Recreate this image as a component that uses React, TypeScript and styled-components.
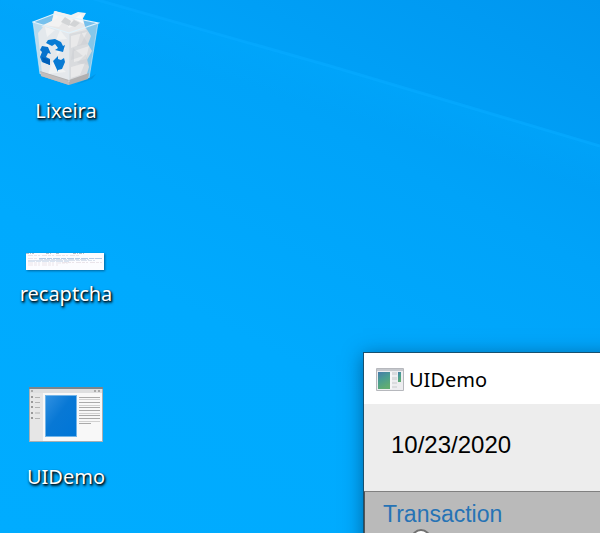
import React from "react";
import styled, { createGlobalStyle } from "styled-components";

const GlobalStyle = createGlobalStyle`
  * { box-sizing: border-box; }
  body { margin: 0; font-family: "Noto Sans", sans-serif; }
`;

const Desktop = styled.main`
  position: relative;
  height: 100vh;
  overflow: hidden;
  background: linear-gradient(28deg, #00acff 0%, #00aafe 38%, #00a3f9 68%, #0096ef 100%);
`;

const LightBeam = styled.svg`
  position: absolute;
  inset: 0;
  width: 100%;
  height: 100%;
`;

const Shortcuts = styled.nav`
  position: relative;
  display: grid;
  grid-template-columns: 132px;
  grid-auto-rows: 183px;
`;

const Shortcut = styled.button`
  display: flex;
  flex-direction: column;
  align-items: center;
  padding: 8px 0 0;
  border: 0;
  background: none;
  color: #fff;
  font: 20px/28px "Noto Sans", sans-serif;
  text-shadow: 1px 1px 2px #000, 1px 2px 3px rgba(0, 0, 0, 0.8);
`;

const IconSlot = styled.span`
  display: flex;
  align-items: center;
  justify-content: center;
  height: 80px;
  margin-bottom: 9px;
`;

const ThumbnailSlot = styled(IconSlot)`
  align-items: flex-end;
  padding: 0 2px 1px 0;
  filter: drop-shadow(1px 1px 1px rgba(0, 30, 60, 0.5));
`;

const AppWindow = styled.section`
  position: absolute;
  top: 352px;
  left: 363px;
  right: -200px;
  border: 1px solid #17506f;
  background: #ededed;
  box-shadow: 0 3px 18px rgba(0, 35, 70, 0.5);
`;

const TitleBar = styled.header`
  display: flex;
  align-items: center;
  gap: 5px;
  height: 51px;
  padding: 2px 12px 0;
  background: #fff;
`;

const Title = styled.h1`
  margin: 0;
  font: 20px/28px "Noto Sans", sans-serif;
  color: #000;
`;

const DateRow = styled.time`
  display: flex;
  align-items: center;
  height: 87px;
  padding: 0 27px 6px;
  font: 24px/32px "Liberation Sans", sans-serif;
  color: #000;
`;

const TransactionGroup = styled.fieldset`
  display: flex;
  flex-direction: column;
  margin: 0;
  padding: 8px 18px 24px;
  border: 0;
  border-top: 1px solid #808080;
  border-left: 1px solid #555;
  background: #bababa;
`;

const GroupTitle = styled.legend`
  float: left;
  padding: 0;
  font: 23px/28px "Liberation Sans", sans-serif;
  color: #2673b5;
`;

const Option = styled.label`
  display: flex;
  align-items: flex-start;
  gap: 6px;
  padding-left: 28px;
  font: 21px/26px "Noto Sans", sans-serif;
  color: #000;
`;

const Radio = styled.input`
  appearance: none;
  width: 20px;
  height: 20px;
  margin: 1px 0 0;
  border: 2px solid #707070;
  border-radius: 50%;
  background: #fff;
`;

const RecycleBin = () => (
  <svg width="68" height="80" viewBox="0 0 68 80" aria-hidden="true">
    <defs>
      <linearGradient id="binLeft" x1="0" y1="0" x2="1" y2="1">
        <stop offset="0" stopColor="#c8dfed" />
        <stop offset="1" stopColor="#e6e8eb" />
      </linearGradient>
    </defs>
    <path d="M57 70 64 66 60 71 43 77Z" fill="#0879bd" opacity=".35" />
    <path d="m1 14 21-8 44 9-29 10Z" fill="#9dcae7" opacity=".75" />
    <path d="m1 14 36 11v51L8 66Z" fill="url(#binLeft)" opacity=".88" />
    <path d="m66 15-9 55-20 6V25Z" fill="#a7cfe5" opacity=".8" />
    <path d="m6 25 6-7 25 7v49L10 66Z" fill="#e8e9eb" opacity=".9" />
    <path d="m37 25 17-5 5 8-3 8 4 7-5 9 2 7-3 10-17 5Z" fill="#d9dbde" />
    <path d="m9 19 11-6 2-10 12 3 6 2 9-3 2 6 3 11-17 4-15-5Z" fill="#e8e8e9" />
    <path d="m20 13 3-10 10 4-6 6Z" fill="#f5f5f5" />
    <path d="m23 3 3 7-6 3-9 4 16 2 5-6 5 7 8-4-5-5 10 1 4-7-8-1-7 3Z" fill="#f2f2f2" />
    <path d="m33 9 6 4-2 5-8-4Zm9 3 6 3-5 4-6-2Z" fill="#d2d4d6" />
    <path d="m49 6 3 10-10-5Z" fill="#fafafa" />
    <path d="m13 19 10 3-8 7Zm15 3 7 9-11 1Zm-5 12 11 6-9 7Zm-14 7 7-7 3 12Zm12 11 13 12-18 2Z" fill="#f8f8f8" opacity=".6" />
    <path d="m39 28 16-4-6 12-10 4Zm3 15 15-5-3 13-12 3Zm-3 16 14-4-5 12-9 3Z" fill="#ededee" opacity=".75" />
    <path d="m49 24 7 12-11 2Zm-8 16 10 8-12 4Zm13 6 3 11-12-2Z" fill="#c9cdd1" opacity=".45" />
    <path d="m8 63 29 9 20-7-1 6-19 6-28-9Z" fill="#b1b0b1" />
    <path d="m9 64 28 9v4L9 68Z" fill="#c2bdbd" />
    <path d="m1 14 21-8 44 9-29 10Z" fill="none" stroke="#e1f3fc" strokeWidth="1.1" />
    <path d="m1 14 7 52m58-51-9 55M37 25v49" stroke="#ddebf4" strokeWidth=".8" opacity=".75" />
    <path d="m16 32 7-1 6 3 2 4 2-1-2 7-8-2 3-2-3-4-3 2-6-3Z" fill="#087bd4" />
    <path d="m10 38 6 1 3 7-3-1-2 4 4 2v6l-8-3-2-5 2-5-2-2Z" fill="#0873cd" />
    <path d="m21 53 5-5v3l3 1 3-2 1 4-3 7-4 1v2Z" fill="#087bd4" />
    <path d="m10 49 8 3v5l-7-3Z" fill="#005fb8" />
  </svg>
);

const DocumentThumbnail = () => (
  <svg width="78" height="17" viewBox="0 0 78 17" aria-hidden="true">
    <path d="M0 0h78v17H0Z" fill="#fcfcff" />
    <path d="M0 .5h8m12 0h5m5 0h4m13 0h12" stroke="#b7bfc7" strokeDasharray="3 1 1 1" />
    <path d="M2 2.5h52M2 5.5h10m53 0h11M36 9.5h40M2 10h40M2 12h30" stroke="#ebe4ea" strokeDasharray="5 1 3 1 2 2" />
    <path d="M13 5.5h63M2 8h42" stroke="#b7cbe4" strokeDasharray="7 1 5 1" />
    <path d="M13 6.5h50M2 7.5h67" stroke="#dae1ed" strokeDasharray="4 1 6 1" />
  </svg>
);

const AppShortcutIcon = () => (
  <svg width="74" height="55" viewBox="0 0 74 55" aria-hidden="true">
    <defs>
      <linearGradient id="bluePane" x2="1" y2="1">
        <stop stopColor="#3090e1" />
        <stop offset=".45" stopColor="#0878d5" />
        <stop offset="1" stopColor="#0076d7" />
      </linearGradient>
    </defs>
    <path d="M0 0h74v55H0Z" fill="#a8afb3" />
    <path d="M0 0h74v2H0Z" fill="#7d858b" />
    <path d="M1 2h72v4H1Z" fill="#dedfe0" />
    <path d="M1 6h13v48H1Z" fill="#e6e6e6" />
    <path d="M14 6h59v48H14Z" fill="#f8f8f8" />
    <path d="M2 3h2v2H2Zm63 0h2v2h-2Zm4 0h2v2h-2Z" fill="#aaa" />
    <path d="M2 10h2M2 15h2M2 20h2M2 26h2M2 31h2" stroke="#999" strokeWidth="2" />
    <path d="M6 10.5h5M6 15.5h5M6 20.5h5M6 26h5M6 31.5h5" stroke="#b2b2b2" />
    <path d="M16 8h32v42H16Z" fill="#72b5e9" />
    <path d="M17 9h30v40H17Z" fill="url(#bluePane)" />
    <path d="M50 10.5h21M50 15.5h21M50 20.5h21M50 23.5h21M50 28.5h21M50 31.5h21M50 36.5h12" stroke="#aaa" />
    <path d="M50 12.5h21M50 18.5h21M50 26.5h21M50 34.5h21" stroke="#d1d1d1" />
  </svg>
);

const TitleIcon = () => (
  <svg width="28" height="23" viewBox="0 0 28 23" aria-hidden="true">
    <defs>
      <linearGradient id="greenPane" x2=".4" y2="1">
        <stop stopColor="#477baa" />
        <stop offset=".5" stopColor="#4a9d91" />
        <stop offset="1" stopColor="#60ac72" />
      </linearGradient>
    </defs>
    <path d="M.5.5h27v22H.5Z" fill="#ededf0" stroke="#b6b8bd" />
    <path d="M1 1h26v2H1Z" fill="#c5c8cd" />
    <path d="M2 4h12v17H2Z" fill="url(#greenPane)" />
    <path d="M16 4h5v3h-5Zm0 5h5v3h-5Zm0 5h5v2h-5Zm0 4h5v2h-5Z" fill="#dadbde" />
    <path d="M22 4h3v10h-3Z" fill="url(#greenPane)" />
    <path d="M15 4v17" stroke="#fff" />
  </svg>
);

export default function App() {
  return (
    <>
      <GlobalStyle />
      <Desktop>
        <LightBeam viewBox="0 0 600 533" preserveAspectRatio="none" aria-hidden="true">
          <defs>
            <linearGradient id="beamBelow" gradientUnits="userSpaceOnUse" x1="330" y1="66" x2="317" y2="111">
              <stop stopColor="#00aaff" stopOpacity=".4" />
              <stop offset="1" stopColor="#00aaff" stopOpacity="0" />
            </linearGradient>
          </defs>
          <path d="M80-5 330 66 600 146v58L0 15V-5Z" fill="url(#beamBelow)" />
          <path d="M80-5 330 66 600 146" stroke="#05a9ff" strokeWidth="3" opacity=".7" fill="none" />
        </LightBeam>
        <Shortcuts aria-label="Desktop">
          <Shortcut type="button"><IconSlot><RecycleBin /></IconSlot>Lixeira</Shortcut>
          <Shortcut type="button"><ThumbnailSlot><DocumentThumbnail /></ThumbnailSlot>recaptcha</Shortcut>
          <Shortcut type="button"><IconSlot><AppShortcutIcon /></IconSlot>UIDemo</Shortcut>
        </Shortcuts>
        <AppWindow aria-label="UIDemo">
          <TitleBar><TitleIcon /><Title>UIDemo</Title></TitleBar>
          <DateRow dateTime="2020-10-23">10/23/2020</DateRow>
          <TransactionGroup>
            <GroupTitle>Transaction</GroupTitle>
            <Option><Radio type="radio" name="transaction" />Deposit</Option>
          </TransactionGroup>
        </AppWindow>
      </Desktop>
    </>
  );
}
